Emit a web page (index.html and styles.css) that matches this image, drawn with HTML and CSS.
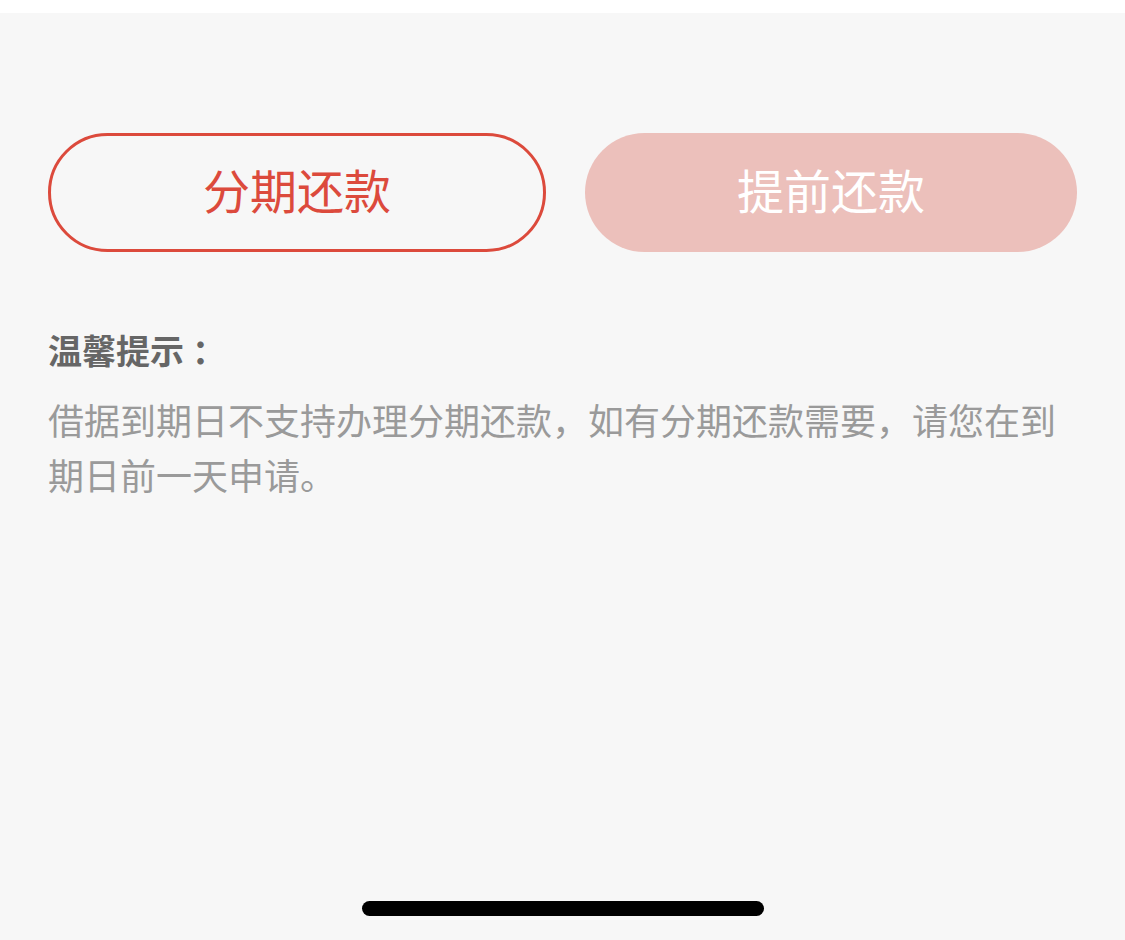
FILE: index.html
```html
<!DOCTYPE html>
<html>
<head>
	<meta charset="utf-8">
	<title>还款</title>
	<link rel="stylesheet" href="styles.css">
</head>
<body>
	<div class="status-strip"></div>
	<div class="page">
		<div class="btn-row">
			<button class="btn btn-outline">分期还款</button>
			<button class="btn btn-fill">提前还款</button>
		</div>
		<div class="tips">
			<h3>温馨提示<span class="colon">：</span></h3>
			<p>借据到期日不支持办理分期还款，如有分期还款需要，请您在到期日前一天申请。</p>
		</div>
		<div class="home-bar">
			<span class="indicator"></span>
		</div>
	</div>
</body>
</html>
```

FILE: styles.css
```css
html, body {
	margin: 0;
	padding: 0;
}

body {
	height: 940px;
	display: flex;
	flex-direction: column;
	background-color: #fff;
	font-family: "Noto Sans CJK SC", "Noto Sans", sans-serif;
}

.status-strip {
	height: 13px;
	background-color: #fff;
}

.page {
	flex: 1;
	display: flex;
	flex-direction: column;
	padding: 0 48px;
	background-color: #f7f7f7;
}

.btn-row {
	display: flex;
	gap: 39px;
	margin-top: 120px;
}

.btn {
	flex: 1;
	height: 119px;
	border-radius: 60px;
	font-family: inherit;
	font-size: 47px;
	line-height: 1;
	padding: 0 0 8px;
	cursor: pointer;
}

.btn-outline {
	background-color: transparent;
	border: 3px solid #dc4a3c;
	color: #dc4a3c;
}

.btn-fill {
	background-color: #ecc0bb;
	border: none;
	color: #fff;
}

.tips {
	margin-top: 78px;
}

.tips h3 {
	margin: 0;
	font-size: 34px;
	line-height: 40px;
	font-weight: bold;
	color: #666;
}

.tips .colon {
	padding-left: 8px;
}

.tips p {
	margin: 22px 0 0;
	font-size: 36px;
	line-height: 55px;
	color: #9a9a9a;
}

.home-bar {
	margin-top: auto;
	padding-bottom: 24px;
	display: flex;
	justify-content: center;
}

.indicator {
	width: 402px;
	height: 15px;
	border-radius: 8px;
	background-color: #000;
}
```
